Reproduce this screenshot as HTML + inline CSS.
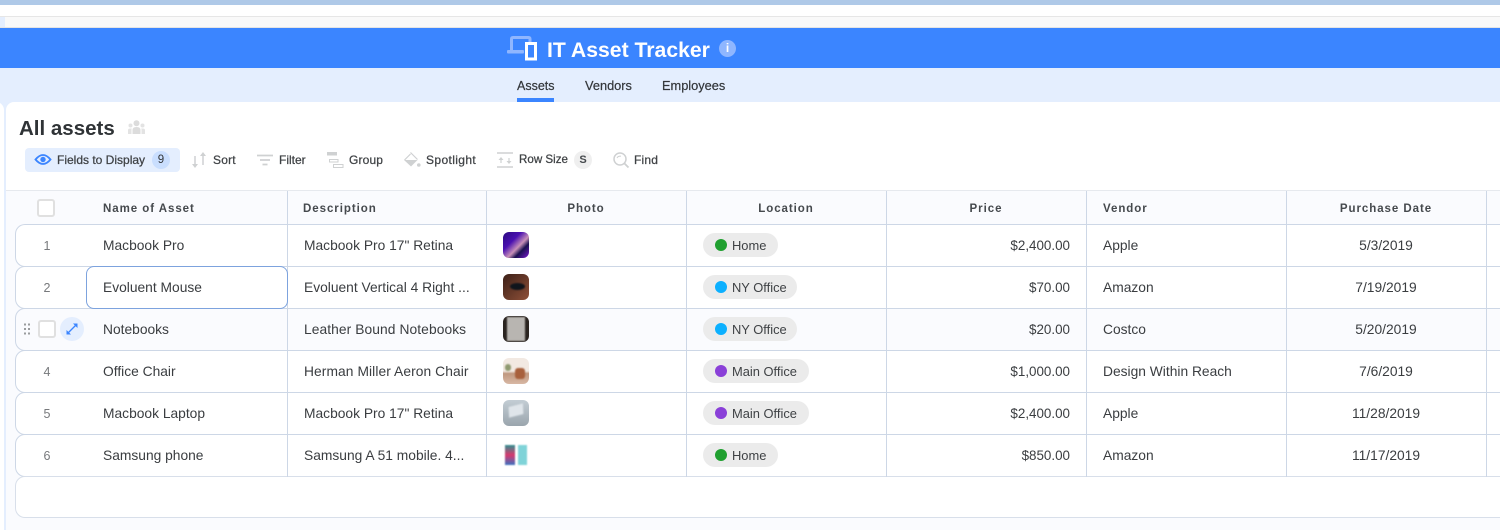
<!DOCTYPE html>
<html><head><meta charset="utf-8">
<style>
*{box-sizing:border-box}
html,body{margin:0;padding:0;width:1500px;height:530px;overflow:hidden;background:#fff;font-family:"Liberation Sans",sans-serif;color:#333}
.a{position:absolute}
.t{position:absolute;white-space:nowrap;line-height:18px;font-size:13.8px;color:#3a3d40;margin-top:1px}
.tab{position:absolute;white-space:nowrap;line-height:18px;font-size:12.8px;color:#33363a;top:77px;-webkit-text-stroke:.2px #33363a}
.c{transform:translateX(-50%)}
.r{transform:translateX(-100%);font-size:13.4px}
.h{position:absolute;white-space:nowrap;line-height:16px;font-size:11.5px;font-weight:bold;letter-spacing:.95px;color:#45494d;top:201px}
.tb{position:absolute;white-space:nowrap;line-height:16px;font-size:12px;color:#3f4245;top:152px;-webkit-text-stroke:.25px #3f4245}
.n{position:absolute;font-size:12.5px;line-height:18px;color:#77797c;transform:translateX(-50%);margin-top:1px}
.row{position:absolute;left:15px;width:1500px;height:43px;background:#fff;border:1px solid #cdd7e6;border-right:0;border-radius:10px 0 0 10px}
.v{position:absolute;width:1px;background:#cdd7e6}
.pill{position:absolute;height:24px;border-radius:12px;background:#ebebeb;font-size:12.9px;line-height:25px;color:#3f4245;padding-left:29px;white-space:nowrap}
.pill i{position:absolute;left:12px;top:6px;width:12px;height:12px;border-radius:50%}
.th{position:absolute;left:503px;width:26px;height:26px;border-radius:6px;overflow:hidden}
.th div{filter:blur(.7px)}
svg{position:absolute;display:block;overflow:visible}
</style></head><body>

<div class="a" style="left:0;top:0;width:1500px;height:5px;background:#afc9e8"></div>
<div class="a" style="left:0;top:16px;width:1500px;height:1px;background:#e6e6e6"></div>
<div class="a" style="left:0;top:17px;width:1500px;height:11px;background:#f9f9f9"></div>
<div class="a" style="left:0;top:17px;width:5px;height:11px;background:#e4eefe"></div>
<div class="a" style="left:0;top:27px;width:1500px;height:1px;background:#e4e4e4"></div>
<div class="a" style="left:0;top:28px;width:1500px;height:40px;background:#3b85ff"></div>
<div class="a" style="left:0;top:68px;width:1500px;height:462px;background:#e4eefe"></div>
<div class="a" style="left:-10px;top:102px;width:14px;height:428px;background:#fff;border-radius:0 8px 0 0"></div>
<div class="a" style="left:6px;top:102px;width:1494px;height:428px;background:#fff;border-radius:8px 0 0 0"></div>

<!-- App header -->
<svg style="left:507px;top:36px" width="34" height="26" viewBox="0 0 34 26">
<path d="M4.500 14V3Q4.500 1.500 6 1.500H21.500Q23 1.500 23 3V6" fill="none" stroke="#8fb6ff" stroke-width="3"/>
<rect x="0" y="14" width="17" height="3.500" rx="1" fill="#8fb6ff"/>
<rect x="19.500" y="7.500" width="9" height="15.500" fill="#3b85ff" stroke="#fff" stroke-width="3"/>
</svg>
<div class="a" style="left:547px;top:37px;font-size:21.200px;line-height:28px;font-weight:bold;color:#fff;white-space:nowrap">IT Asset Tracker</div>
<div class="a" style="left:719px;top:40px;width:17px;height:17px;border-radius:50%;background:#8fb6ff;color:#fff;font-size:12px;font-weight:bold;line-height:17px;text-align:center">i</div>

<!-- Tabs -->
<div class="tab" style="left:517px;font-size:12.500px">Assets</div>
<div class="a" style="left:517px;top:98px;width:37px;height:4px;background:#3b85ff"></div>
<div class="tab" style="left:585px">Vendors</div>
<div class="tab" style="left:662px">Employees</div>

<!-- Title -->
<div class="a" style="left:19px;top:115px;font-size:20.500px;line-height:28px;font-weight:bold;color:#2f3336;white-space:nowrap">All assets</div>
<svg style="left:128px;top:120px" width="17" height="15" viewBox="0 0 17 15">
<circle cx="8.500" cy="3.200" r="3" fill="#dcdcdc"/><circle cx="2.500" cy="5.500" r="2" fill="#e3e3e3"/><circle cx="14.500" cy="5.500" r="2" fill="#e3e3e3"/>
<path d="M4.500 14V10Q4.500 7 8.500 7T12.500 10V14Z" fill="#dcdcdc"/><path d="M0 14V10Q0 8.500 2.500 8.500T3.500 9V14ZM17 14V10Q17 8.500 14.500 8.500T13.500 9V14Z" fill="#e3e3e3"/>
</svg>

<!-- Toolbar -->
<div class="a" style="left:25px;top:148px;width:155px;height:24px;background:#e4eefe;border-radius:4px"></div>
<svg style="left:35px;top:153px" width="16" height="13" viewBox="0 0 16 13">
<path d="M0.500 6.500Q8 -2.500 15.500 6.500Q8 15.500 .5 6.500Z" fill="none" stroke="#3b85ff" stroke-width="1.800"/><circle cx="8" cy="6.500" r="2.700" fill="#3b85ff"/>
</svg>
<div class="tb" style="left:57px">Fields to Display</div>
<div class="a" style="left:152px;top:151px;width:18px;height:18px;border-radius:50%;background:#c9defe;font-size:11.500px;line-height:18px;text-align:center;color:#33363a">9</div>

<svg style="left:191px;top:152px" width="16" height="16" viewBox="0 0 16 16">
<path d="M4 4V14" stroke="#cfd1d2" stroke-width="1.500"/><path d="M1 12H7L4 16Z" fill="#cfd1d2"/>
<path d="M12 3V13" stroke="#cfd1d2" stroke-width="1.500"/><path d="M9 4H15L12 0Z" fill="#cfd1d2"/>
</svg>
<div class="tb" style="left:213px;letter-spacing:.2px">Sort</div>
<svg style="left:257px;top:154px" width="16" height="12" viewBox="0 0 16 12">
<path d="M0 1.500H16M3 6H13M5.500 10.500H10.500" stroke="#cfd1d2" stroke-width="1.800"/>
</svg>
<div class="tb" style="left:279px">Filter</div>
<svg style="left:327px;top:152px" width="17" height="16" viewBox="0 0 17 16">
<rect x="0" y="0" width="10" height="3.500" fill="#cfd1d2"/><rect x="2.500" y="7.500" width="8.500" height="2.500" fill="none" stroke="#cfd1d2"/><rect x="6.500" y="12.500" width="9.500" height="3" fill="none" stroke="#cfd1d2"/>
</svg>
<div class="tb" style="left:349px;letter-spacing:.15px">Group</div>
<svg style="left:404px;top:152px" width="17" height="16" viewBox="0 0 17 16">
<path d="M6.500 0.500L13.500 7.500M6.500 2L0.500 8" fill="none" stroke="#cfd1d2" stroke-width="1.200"/><path d="M0 8H13.500L7 14.500Z" fill="#cfd1d2"/><circle cx="14.800" cy="13" r="1.800" fill="#cfd1d2"/>
</svg>
<div class="tb" style="left:426px;letter-spacing:.38px">Spotlight</div>
<svg style="left:497px;top:152px" width="16" height="16" viewBox="0 0 16 16">
<path d="M0 1H16M0 15H16" stroke="#cfd1d2" stroke-width="1.600"/><path d="M4 5L6.500 8H1.500ZM12 12L14.500 9H9.500Z" fill="#cfd1d2"/><path d="M4 7.500V11M12 6V9.500" stroke="#cfd1d2" stroke-width="1.200"/>
</svg>
<div class="tb" style="left:519px;font-size:11.600px">Row Size</div>
<div class="a" style="left:574px;top:151px;width:18px;height:18px;border-radius:50%;background:#efefef;font-size:11px;font-weight:bold;line-height:18px;text-align:center;color:#45494d">S</div>
<svg style="left:613px;top:152px" width="17" height="16" viewBox="0 0 17 16">
<circle cx="7" cy="7" r="6" fill="none" stroke="#cfd1d2" stroke-width="1.500"/><path d="M11.500 11.500L15.500 15.500" stroke="#cfd1d2" stroke-width="1.800"/><path d="M4 6Q5 4 8 4.200" fill="none" stroke="#cfd1d2"/>
</svg>
<div class="tb" style="left:634px;letter-spacing:.2px">Find</div>

<!-- Grid background -->
<div class="a" style="left:6px;top:190px;width:1494px;height:340px;background:#fafbfe;border-top:1px solid #e6e9ee"></div>

<!-- Header -->
<div class="a" style="left:37px;top:199px;width:18px;height:18px;border:2px solid #e0e0e0;border-radius:3px;background:#fff"></div>
<div class="h" style="left:103px">Name of Asset</div>
<div class="h" style="left:303px">Description</div>
<div class="h c" style="left:586px">Photo</div>
<div class="h c" style="left:786px">Location</div>
<div class="h c" style="left:986px">Price</div>
<div class="h" style="left:1103px">Vendor</div>
<div class="h c" style="left:1386px">Purchase Date</div>

<!-- Rows -->
<div class="row" style="top:224px"></div>
<div class="row" style="top:266px"></div>
<div class="row" style="top:308px;background:#fafbfe"></div>
<div class="row" style="top:350px"></div>
<div class="row" style="top:392px"></div>
<div class="row" style="top:434px"></div>
<div class="row" style="top:476px;height:42px;border-color:#d8dfea"></div>

<!-- Column lines -->
<div class="v" style="left:287px;top:191px;height:286px"></div>
<div class="v" style="left:486px;top:191px;height:286px"></div>
<div class="v" style="left:686px;top:191px;height:286px"></div>
<div class="v" style="left:886px;top:191px;height:286px"></div>
<div class="v" style="left:1086px;top:191px;height:286px"></div>
<div class="v" style="left:1286px;top:191px;height:286px"></div>
<div class="v" style="left:1486px;top:191px;height:286px"></div>

<!-- Focused cell -->
<div class="a" style="left:86px;top:266px;width:202px;height:43px;background:#fff;border:1px solid #7da3de;border-radius:8px"></div>

<!-- Row controls -->
<div class="n" style="left:47px;top:236px">1</div>
<div class="n" style="left:47px;top:278px">2</div>
<svg style="left:23px;top:323px" width="8" height="13" viewBox="0 0 8 13" fill="#9a9c9e">
<rect x="1" y="0.500" width="2" height="2"/><rect x="5" y="0.500" width="2" height="2"/><rect x="1" y="5" width="2" height="2"/><rect x="5" y="5" width="2" height="2"/><rect x="1" y="9.500" width="2" height="2"/><rect x="5" y="9.500" width="2" height="2"/>
</svg>
<div class="a" style="left:38px;top:320px;width:18px;height:18px;border:2px solid #e0e0e0;border-radius:3px;background:#fff"></div>
<div class="a" style="left:60px;top:317px;width:24px;height:24px;border-radius:50%;background:#e4eefe"></div>
<svg style="left:66px;top:323px" width="12" height="12" viewBox="0 0 12 12">
<path d="M2.500 9.500L9.500 2.500" stroke="#3b85ff" stroke-width="1.300"/><path d="M7 0.500H11.500V5ZM0.500 7V11.500H5Z" fill="#3b85ff"/>
</svg>
<div class="n" style="left:47px;top:362px">4</div>
<div class="n" style="left:47px;top:404px">5</div>
<div class="n" style="left:47px;top:446px">6</div>

<!-- Names -->
<div class="t" style="left:103px;top:236px">Macbook Pro</div>
<div class="t" style="left:103px;top:278px">Evoluent Mouse</div>
<div class="t" style="left:103px;top:320px">Notebooks</div>
<div class="t" style="left:103px;top:362px">Office Chair</div>
<div class="t" style="left:103px;top:404px">Macbook Laptop</div>
<div class="t" style="left:103px;top:446px">Samsung phone</div>

<!-- Descriptions -->
<div class="t" style="left:304px;top:236px">Macbook Pro 17" Retina</div>
<div class="t" style="left:304px;top:278px">Evoluent Vertical 4 Right ...</div>
<div class="t" style="left:304px;top:320px;letter-spacing:.08px">Leather Bound Notebooks</div>
<div class="t" style="left:304px;top:362px;letter-spacing:.08px">Herman Miller Aeron Chair</div>
<div class="t" style="left:304px;top:404px">Macbook Pro 17" Retina</div>
<div class="t" style="left:304px;top:446px">Samsung A 51 mobile. 4...</div>

<!-- Photos -->
<div class="th" style="top:232px;background:linear-gradient(135deg,#2a0a80 0%,#4a10b0 35%,#c890b8 58%,#1a1050 72%,#7a18d0 100%)"></div>
<div class="th" style="top:274px;background:linear-gradient(135deg,#3c2018,#8f5038)"><div class="a" style="left:7px;top:9px;width:15px;height:7px;background:#10151c;border-radius:50%"></div></div>
<div class="th" style="top:316px;background:#2a2420"><div class="a" style="left:4px;top:1px;width:18px;height:24px;background:#b8b5b1"></div></div>
<div class="th" style="top:358px;background:linear-gradient(#f2e9e2 50%,#c09880 60%,#d8b8a4)"><div class="a" style="left:12px;top:10px;width:10px;height:11px;background:#a8603c;border-radius:3px"></div><div class="a" style="left:2px;top:6px;width:6px;height:7px;background:#8f9a70;border-radius:3px"></div></div>
<div class="th" style="top:400px;background:linear-gradient(#c3cdd4,#9aa5ad)"><div class="a" style="left:6px;top:5px;width:14px;height:11px;background:#dfe5ea;transform:skewX(-12deg) rotate(-15deg)"></div></div>
<div class="th" style="top:442px;background:#fff"><div class="a" style="left:2px;top:3px;width:10px;height:20px;background:linear-gradient(#2f8f8f,#d8386c 50%,#3a70c0)"></div><div class="a" style="left:15px;top:3px;width:9px;height:20px;background:#7fd3d8"></div></div>

<!-- Locations -->
<div class="pill" style="left:703px;top:233px;width:75px"><i style="background:#20a030"></i>Home</div>
<div class="pill" style="left:703px;top:275px;width:94px"><i style="background:#0cb0ff"></i>NY Office</div>
<div class="pill" style="left:703px;top:317px;width:94px"><i style="background:#0cb0ff"></i>NY Office</div>
<div class="pill" style="left:703px;top:359px;width:106px"><i style="background:#8a40d8"></i>Main Office</div>
<div class="pill" style="left:703px;top:401px;width:106px"><i style="background:#8a40d8"></i>Main Office</div>
<div class="pill" style="left:703px;top:443px;width:75px"><i style="background:#20a030"></i>Home</div>

<!-- Prices -->
<div class="t r" style="left:1070px;top:236px">$2,400.00</div>
<div class="t r" style="left:1070px;top:278px">$70.00</div>
<div class="t r" style="left:1070px;top:320px">$20.00</div>
<div class="t r" style="left:1070px;top:362px">$1,000.00</div>
<div class="t r" style="left:1070px;top:404px">$2,400.00</div>
<div class="t r" style="left:1070px;top:446px">$850.00</div>

<!-- Vendors -->
<div class="t" style="left:1103px;top:236px">Apple</div>
<div class="t" style="left:1103px;top:278px">Amazon</div>
<div class="t" style="left:1103px;top:320px">Costco</div>
<div class="t" style="left:1103px;top:362px">Design Within Reach</div>
<div class="t" style="left:1103px;top:404px">Apple</div>
<div class="t" style="left:1103px;top:446px">Amazon</div>

<!-- Dates -->
<div class="t c" style="left:1386px;top:236px">5/3/2019</div>
<div class="t c" style="left:1386px;top:278px">7/19/2019</div>
<div class="t c" style="left:1386px;top:320px">5/20/2019</div>
<div class="t c" style="left:1386px;top:362px">7/6/2019</div>
<div class="t c" style="left:1386px;top:404px">11/28/2019</div>
<div class="t c" style="left:1386px;top:446px">11/17/2019</div>

</body></html>
